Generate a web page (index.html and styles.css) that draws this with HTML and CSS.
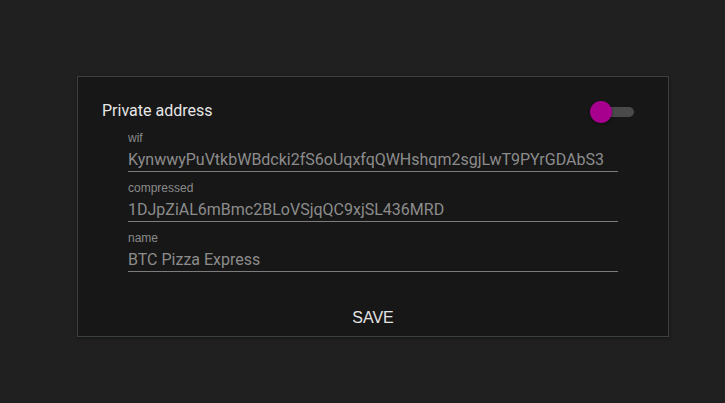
FILE: index.html
```html
<!DOCTYPE html>
<html>
<head>
<meta charset="utf-8">
<link rel="stylesheet" href="styles.css">
</head>
<body>
<div class="card">
  <div class="header">
    <div class="title">Private address</div>
    <div class="switch"><div class="track"></div><div class="thumb"></div></div>
  </div>
  <div class="fields">
    <div class="field">
      <div class="label">wif</div>
      <div class="value">KynwwyPuVtkbWBdcki2fS6oUqxfqQWHshqm2sgjLwT9PYrGDAbS3</div>
    </div>
    <div class="field">
      <div class="label">compressed</div>
      <div class="value">1DJpZiAL6mBmc2BLoVSjqQC9xjSL436MRD</div>
    </div>
    <div class="field">
      <div class="label">name</div>
      <div class="value">BTC Pizza Express</div>
    </div>
  </div>
  <div class="actions"><span class="save">SAVE</span></div>
</div>
</body>
</html>
```

FILE: styles.css
```css
html, body {
  margin: 0;
  padding: 0;
  background: #202020;
  height: 100%;
}
body {
  padding-top: 76px;
  padding-left: 77px;
  box-sizing: border-box;
}
.card {
  width: 592px;
  box-sizing: border-box;
  border: 1px solid #3b413f;
  background: #171717;
  padding: 24px 0 8px 0;
  box-shadow: 0 1px 3px rgba(0,0,0,0.4);
}
.header {
  display: flex;
  align-items: center;
  justify-content: space-between;
  padding: 0 34px 0 24px;
  height: 20px;
}
.title {
  font-family: Roboto, sans-serif;
  font-size: 16px;
  line-height: 20px;
  color: #e6e6e6;
}
.switch {
  position: relative;
  width: 34px;
  height: 22px;
  margin-top: 2px;
}
.track {
  position: absolute;
  left: 0;
  top: 6px;
  width: 34px;
  height: 10px;
  border-radius: 5px;
  background: #4a4a4a;
}
.thumb {
  position: absolute;
  left: -10px;
  top: 0;
  width: 22px;
  height: 22px;
  border-radius: 50%;
  background: #a7008f;
  box-shadow: 0 1px 3px rgba(0,0,0,0.5);
}
.fields {
  margin: 10px 50px 0 50px;
  display: flex;
  flex-direction: column;
  gap: 9px;
}
.label {
  font-family: "Liberation Sans", Arial, sans-serif;
  font-size: 12px;
  line-height: 14px;
  color: #8a8a8a;
  margin-bottom: 5px;
}
.value {
  font-family: Roboto, sans-serif;
  font-size: 16px;
  line-height: 20px;
  color: #8c8c8c;
  padding-bottom: 1px;
  border-bottom: 1px solid #7c7c7c;
  white-space: nowrap;
  overflow: hidden;
}
.actions {
  margin-top: 36px;
  text-align: center;
  height: 20px;
}
.save {
  font-family: "Liberation Sans", Arial, sans-serif;
  font-size: 16px;
  line-height: 20px;
  color: #e4e4e4;
}
```
